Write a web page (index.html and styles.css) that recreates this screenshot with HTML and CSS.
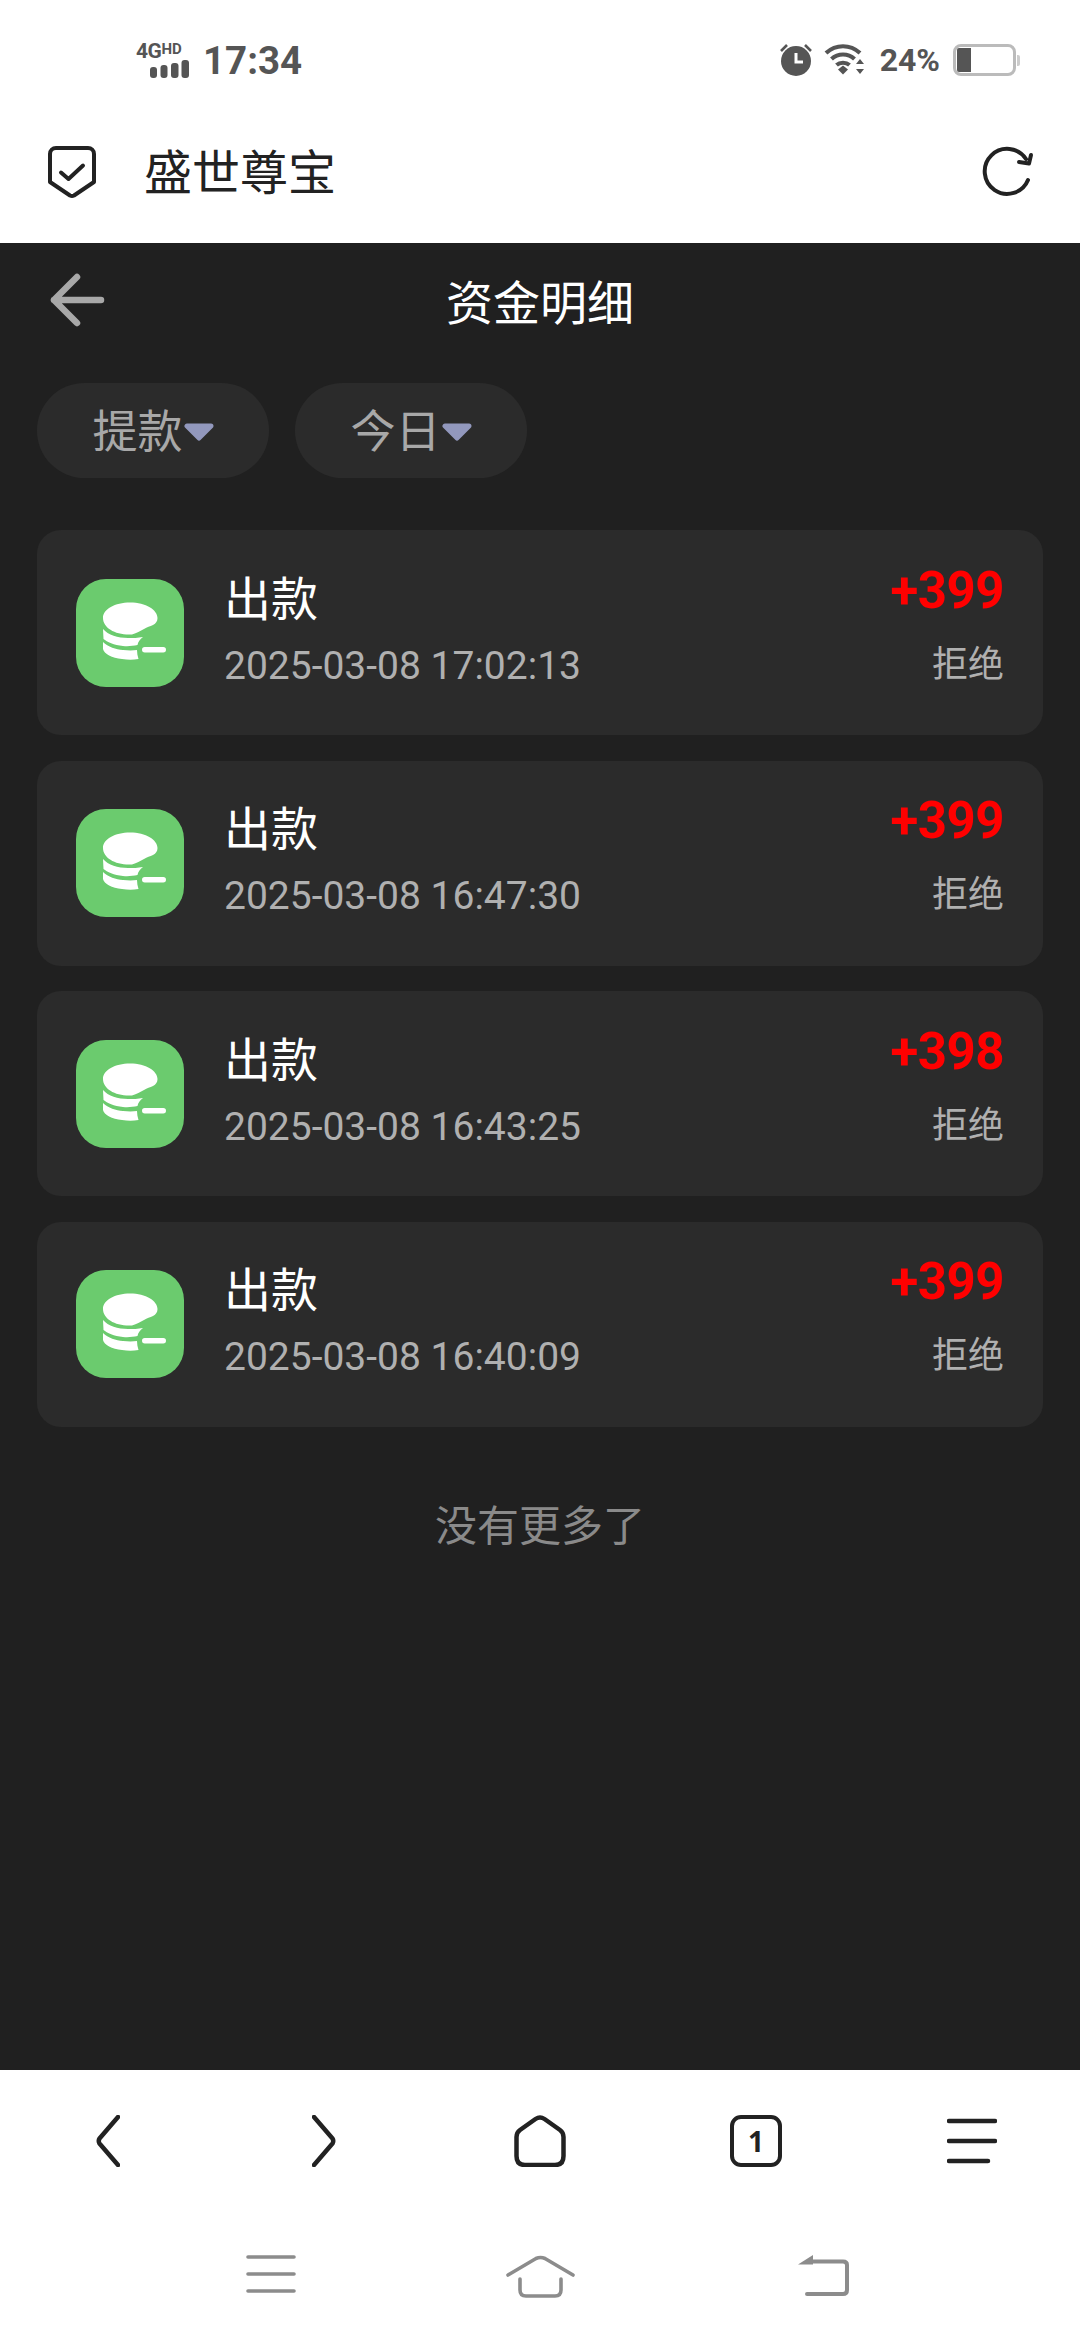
FILE: index.html
```html
<!DOCTYPE html>
<html lang="zh-CN">
<head>
    <meta charset="UTF-8">
    <meta name="viewport" content="width=device-width, initial-scale=1.0">
    <title>资金明细</title>
    <link rel="stylesheet" href="styles.css">
</head>
<body>
    <svg class="sprites" width="0" height="0">
        <symbol id="coin" viewBox="0 0 108 108">
            <path d="M27 39C27 30 39 23.5 54 23.5C70 23.5 81.5 31 81.5 39C81.5 42 80 44.5 77 46C74 47.5 71 48 68 50C64 52 61 54 56 55.5C40 56.5 27 49 27 39Z"/>
            <path d="M27 50C32 56 42 59 52 59C57 59 62 59 67 58C64 60 62 63 61.5 66C57 67 52 67.5 47 67C38 66 31 63 27.5 60Z"/>
            <path d="M27 63C32 68 40 70.5 47 71C52 71.5 57 71.5 61 71C61 74 61.5 77 62.5 80C57 81 52 81 46 80C36 79 28 75 27 70Z"/>
            <rect x="66" y="68" width="24" height="5.5" rx="2.75"/>
        </symbol>
        <symbol id="caret" viewBox="0 0 30 18">
            <path d="M3 3H27L15 15Z" stroke-width="5" stroke-linejoin="round"/>
        </symbol>
    </svg>

    <div class="status-bar">
        <div class="status-left">
            <div class="net">
                <div class="net-type"><span class="net-g">4G</span><span class="net-hd">HD</span></div>
                <svg class="net-bars" width="39" height="18" viewBox="0 0 39 18" fill="#555">
                    <rect x="0" y="7" width="7" height="11" rx="3"/>
                    <rect x="10.5" y="5" width="7" height="13" rx="3"/>
                    <rect x="21" y="3" width="7.5" height="15" rx="3"/>
                    <rect x="31.5" y="0" width="7.5" height="18" rx="3"/>
                </svg>
            </div>
            <span class="clock">17:34</span>
        </div>
        <div class="status-right">
            <svg width="34" height="34" viewBox="0 0 34 34" fill="#555">
                <circle cx="17" cy="18" r="15"/>
                <path d="M17 10v9h7" fill="none" stroke="#fff" stroke-width="3"/>
                <path d="M2 8l6-6M32 8l-6-6" fill="none" stroke="#555" stroke-width="2.6"/>
            </svg>
            <svg class="wifi" width="44" height="32" viewBox="0 0 42 32" fill="none" stroke="#555" stroke-width="4.2">
                <path d="M2 9C12 0 26 0 36 9"/>
                <path d="M7.5 15C14 9 24 9 30.5 15"/>
                <path d="M12.5 21C16 18 22 18 25.5 21"/>
                <path d="M14 25.5L19 21.5L24 25.5L19 30.5Z" fill="#555" stroke="none"/>
                <path d="M36 15l4 5h-8zM36 30l4-5h-8z" fill="#555" stroke="none"/>
            </svg>
            <span class="battery-pct">24%</span>
            <div class="battery">
                <div class="battery-body"><div class="battery-level"></div></div>
                <div class="battery-cap"></div>
            </div>
        </div>
    </div>

    <header class="browser-head">
        <svg width="50" height="54" viewBox="0 0 50 54" fill="none" stroke="#222" stroke-width="4" stroke-linejoin="round" stroke-linecap="round">
            <path d="M9 3H41A6 6 0 0 1 47 9V37L27 50.5Q25 51.5 23 50.5L3 37V9A6 6 0 0 1 9 3Z"/>
            <path d="M14 27.5L21.5 34L36 20.5"/>
        </svg>
        <span class="site-name">盛世尊宝</span>
        <svg class="reload" width="52" height="52" viewBox="0 0 52 52" fill="none" stroke="#222" stroke-width="4" stroke-linecap="round" stroke-linejoin="round">
            <path d="M46 34A22.5 22.5 0 1 1 44 13"/>
            <path d="M49 9L47 17.5L37 16"/>
        </svg>
    </header>

    <main class="page">
        <div class="page-title">
            <svg class="back" width="56" height="54" viewBox="0 0 56 54" fill="none" stroke="#a8a8a8" stroke-width="6.5" stroke-linecap="round" stroke-linejoin="round">
                <path d="M52 27H5M28 4L5 27L28 50"/>
            </svg>
            <h1>资金明细</h1>
        </div>

        <div class="filters">
            <div class="pill">提款<svg class="caret" width="30" height="18"><use href="#caret"/></svg></div>
            <div class="pill">今日<svg class="caret" width="30" height="18"><use href="#caret"/></svg></div>
        </div>

        <div class="records">
            <div class="record">
                <div class="record-icon"><svg width="108" height="108"><use href="#coin"/></svg></div>
                <div class="record-info">
                    <div class="record-name">出款</div>
                    <div class="record-time">2025-03-08 17:02:13</div>
                </div>
                <div class="record-side">
                    <div class="record-amount">+399</div>
                    <div class="record-state">拒绝</div>
                </div>
            </div>
            <div class="record">
                <div class="record-icon"><svg width="108" height="108"><use href="#coin"/></svg></div>
                <div class="record-info">
                    <div class="record-name">出款</div>
                    <div class="record-time">2025-03-08 16:47:30</div>
                </div>
                <div class="record-side">
                    <div class="record-amount">+399</div>
                    <div class="record-state">拒绝</div>
                </div>
            </div>
            <div class="record">
                <div class="record-icon"><svg width="108" height="108"><use href="#coin"/></svg></div>
                <div class="record-info">
                    <div class="record-name">出款</div>
                    <div class="record-time">2025-03-08 16:43:25</div>
                </div>
                <div class="record-side">
                    <div class="record-amount">+398</div>
                    <div class="record-state">拒绝</div>
                </div>
            </div>
            <div class="record">
                <div class="record-icon"><svg width="108" height="108"><use href="#coin"/></svg></div>
                <div class="record-info">
                    <div class="record-name">出款</div>
                    <div class="record-time">2025-03-08 16:40:09</div>
                </div>
                <div class="record-side">
                    <div class="record-amount">+399</div>
                    <div class="record-state">拒绝</div>
                </div>
            </div>
        </div>

        <p class="no-more">没有更多了</p>
    </main>

    <nav class="browser-bar">
        <div class="bar-cell">
            <svg width="24" height="52" viewBox="0 0 24 52" fill="none" stroke="#222" stroke-width="4.5" stroke-linecap="round" stroke-linejoin="round">
                <path d="M22 2L3.5 23.5Q2 26 3.5 28.5L22 50"/>
            </svg>
        </div>
        <div class="bar-cell">
            <svg width="24" height="52" viewBox="0 0 24 52" fill="none" stroke="#222" stroke-width="4.5" stroke-linecap="round" stroke-linejoin="round">
                <path d="M2 2L20.5 23.5Q22 26 20.5 28.5L2 50"/>
            </svg>
        </div>
        <div class="bar-cell">
            <svg width="52" height="52" viewBox="0 0 52 52" fill="none" stroke="#222" stroke-width="4.5" stroke-linejoin="round">
                <path d="M21.5 4Q26 1 30.5 4L46 15Q49.5 17.5 49.5 22V41Q49.5 50 41 50H11Q2.5 50 2.5 41V22Q2.5 17.5 6 15Z"/>
            </svg>
        </div>
        <div class="bar-cell"><div class="tab-count">1</div></div>
        <div class="bar-cell">
            <svg width="50" height="46" viewBox="0 0 50 46" fill="none" stroke="#222" stroke-width="4.5" stroke-linecap="round">
                <path d="M2 3H48M2 23H48M2 43H41"/>
            </svg>
        </div>
    </nav>

    <div class="nav-bar">
        <svg width="50" height="38" viewBox="0 0 50 38" fill="none" stroke="#8c8c8c" stroke-width="3.6" stroke-linecap="round">
            <path d="M2 2H48M2 19H48M2 36H48"/>
        </svg>
        <svg class="nav-home" width="69" height="43" viewBox="0 0 69 43" fill="none" stroke="#8c8c8c" stroke-width="3.6" stroke-linecap="round" stroke-linejoin="round">
            <path d="M2 20L30 3.5Q34.5 1.5 39 3.5L67 20"/>
            <path d="M14 24V35Q14 41 20 41H49Q55 41 55 35V24"/>
        </svg>
        <svg width="51" height="41" viewBox="0 0 51 41" fill="none" stroke="#8c8c8c" stroke-width="4" stroke-linecap="round" stroke-linejoin="round">
            <path d="M9 39H45Q49 39 49 35V10Q49 6.5 45 6.5H10"/>
            <path d="M15 0V9.5H0Z" fill="#8c8c8c" stroke="none"/>
        </svg>
    </div>
</body>
</html>
```
FILE: styles.css
```css
* { margin: 0; padding: 0; box-sizing: border-box; }
body {
    width: 1080px;
    height: 2340px;
    display: flex;
    flex-direction: column;
    background: #fff;
    font-family: "Noto Sans CJK SC", Roboto, sans-serif;
    overflow: hidden;
}
svg { display: block; flex: none; }
.sprites { position: absolute; }

/* phone status bar */
.status-bar {
    height: 100px;
    display: flex;
    justify-content: space-between;
    align-items: center;
    padding: 20px 60px 0 136px;
    color: #555;
    font-family: Roboto, sans-serif;
}
.status-left { display: flex; align-items: center; gap: 14px; }
.net { width: 53px; }
.net-type { display: flex; height: 18px; line-height: 18px; font-weight: 700; }
.net-g { font-size: 21px; letter-spacing: -0.5px; }
.net-hd { font-size: 15px; line-height: 14px; }
.net-bars { margin-left: 14px; }
.clock { font-size: 38.5px; font-weight: 700; }
.status-right { display: flex; align-items: center; }
.wifi { margin-left: 10px; }
.battery-pct { margin-left: 13px; font-size: 32px; font-weight: 700; }
.battery { display: flex; align-items: center; margin-left: 13px; }
.battery-body {
    width: 63px;
    height: 32px;
    padding: 1px;
    border: 3px solid #bbb;
    border-radius: 8px;
}
.battery-level { width: 14px; height: 100%; background: #555; border-radius: 2px 0 0 2px; }
.battery-cap { width: 3px; height: 11px; margin-left: 1px; background: #ccc; border-radius: 0 2px 2px 0; }

/* browser title row */
.browser-head {
    height: 143px;
    display: flex;
    align-items: center;
    padding: 0 46px 0 47px;
}
.site-name { margin-left: 47px; padding-bottom: 5px; font-size: 48px; color: #222; }
.reload { margin-left: auto; }

/* the dark page inside the browser */
.page {
    flex: 1;
    background: #202020;
    padding: 0 37px;
}
.page-title {
    position: relative;
    height: 118px;
    display: flex;
    justify-content: center;
    align-items: center;
    padding-bottom: 6px;
}
.page-title h1 { font-size: 47px; font-weight: 400; color: #fff; }
.back { position: absolute; left: 12px; top: 30px; }

.filters { display: flex; gap: 26px; margin-top: 22px; }
.pill {
    width: 232px;
    height: 95px;
    display: flex;
    justify-content: center;
    align-items: center;
    padding-bottom: 5px;
    background: #2b2b2b;
    border-radius: 48px;
    color: #a8a8a8;
    font-size: 45px;
}
.caret { margin: 7px 0 0 1px; fill: #9298bd; stroke: #9298bd; }

.records { display: flex; flex-direction: column; gap: 25.67px; margin-top: 52px; }
.record {
    height: 205px;
    display: flex;
    align-items: center;
    padding: 0 39px;
    background: #2b2b2b;
    border-radius: 24px;
}
.record-icon { width: 108px; height: 108px; background: #6bcb6e; border-radius: 30px; fill: #fff; }
.record-info { margin-left: 40px; padding-bottom: 9px; }
.record-name { height: 60px; line-height: 60px; font-size: 47px; color: #fff; }
.record-time {
    height: 50px;
    margin-top: 15px;
    line-height: 50px;
    font-family: Roboto, sans-serif;
    font-size: 39px;
    color: #b0b0b0;
}
.record-side { margin-left: auto; padding-bottom: 19px; text-align: right; }
.record-amount {
    height: 60px;
    line-height: 60px;
    font-family: Roboto, sans-serif;
    font-size: 51px;
    font-weight: 700;
    letter-spacing: -0.5px;
    color: #f00;
}
.record-state { height: 50px; margin-top: 15px; line-height: 50px; font-size: 36px; color: #b0b0b0; }

.no-more { margin-top: 66px; text-align: center; font-size: 42px; line-height: 60px; color: #8a8a8a; }

/* browser toolbar and system keys */
.browser-bar { height: 142px; display: flex; align-items: center; flex: none; }
.bar-cell { width: 216px; display: flex; justify-content: center; }
.tab-count {
    width: 52px;
    height: 52px;
    display: flex;
    justify-content: center;
    align-items: center;
    border: 4.5px solid #222;
    border-radius: 11px;
    font-family: "Open Sans", sans-serif;
    font-size: 28px;
    font-weight: 700;
    color: #222;
}
.nav-bar { height: 128px; display: flex; align-items: flex-start; padding: 43px 0 0 246px; flex: none; }
.nav-home { margin: 0 223px 0 210px; }
```
